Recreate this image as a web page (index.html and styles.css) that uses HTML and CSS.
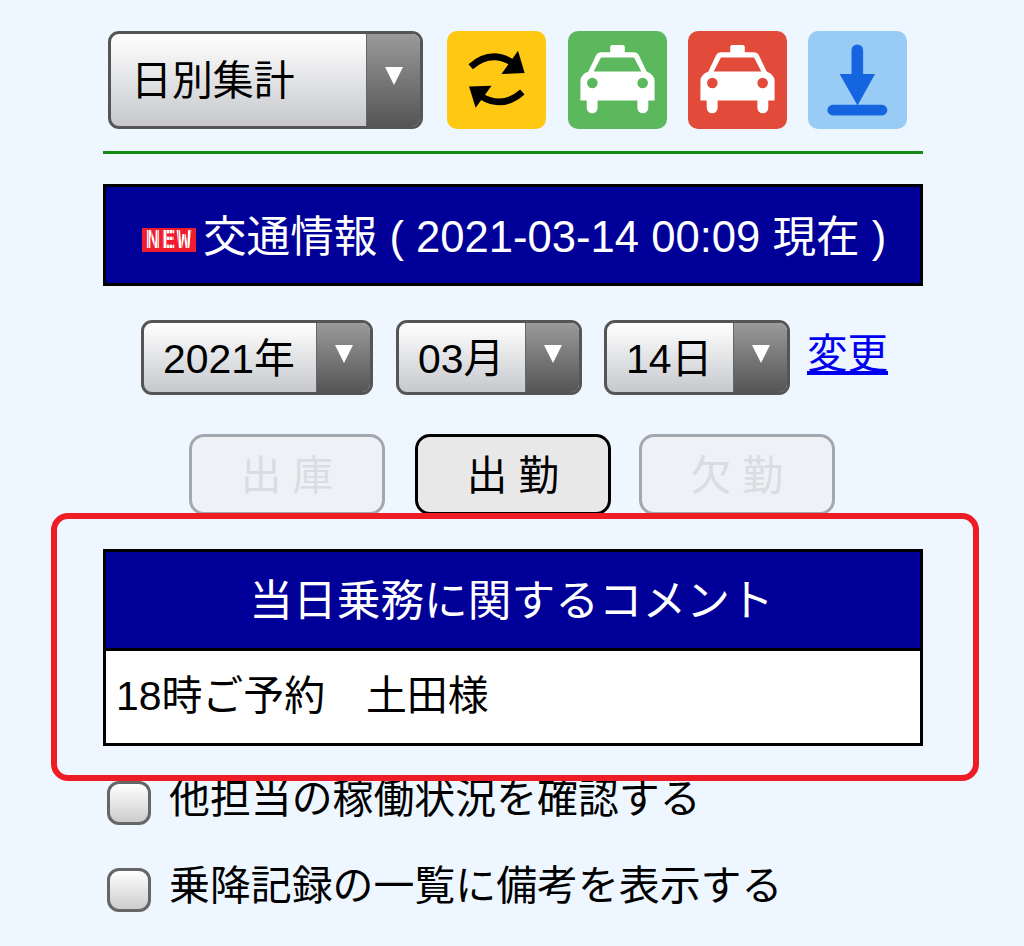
FILE: index.html
```html
<!DOCTYPE html>
<html lang="ja">
<head>
  <meta charset="UTF-8" />
  <title>日別集計</title>
  <link rel="stylesheet" href="styles.css">
</head>
<body>

<div class="marco">
  <div class="fila-top">
    <div class="sel sel-top"><span class="sel-txt">日別集計</span><span class="sel-btn"></span></div>
    <div class="iconos">
      <a class="tile amarillo">
        <svg viewBox="0 0 296 296">
          <path d="M70 108 Q130 55 195 95" fill="none" stroke="#000" stroke-width="20"/>
          <polygon points="213,60 233,127 163,130" fill="#000"/>
          <path d="M226 184 Q166 237 101 197" fill="none" stroke="#000" stroke-width="20"/>
          <polygon points="85,232 65,168 133,165" fill="#000"/>
        </svg>
      </a>
      <a class="tile verde">
        <svg viewBox="0 0 296 296">
          <use href="#taxi"/>
          <circle cx="72" cy="157" r="16" fill="#5cb85c"/>
          <circle cx="224" cy="157" r="16" fill="#5cb85c"/>
          <path d="M98 80H198L220 122H76Z" fill="#5cb85c"/>
        </svg>
      </a>
      <a class="tile rojo">
        <svg viewBox="0 0 296 296">
          <use href="#taxi"/>
          <circle cx="72" cy="157" r="16" fill="#e24a3a"/>
          <circle cx="224" cy="157" r="16" fill="#e24a3a"/>
          <path d="M98 80H198L220 122H76Z" fill="#e24a3a"/>
        </svg>
      </a>
      <a class="tile celeste">
        <svg viewBox="0 0 296 296">
          <path d="M130 58a17.500 17.500 0 0 1 35 0V130H201L148 225L94 130H130Z" fill="#1565e0"/>
          <rect x="57" y="223" width="181" height="32" rx="16" fill="#1565e0"/>
        </svg>
      </a>
    </div>
  </div>

  <div class="linea"></div>

  <div class="titulo info"><span class="nuevo">NEW</span>交通情報 ( 2021-03-14 00:09 現在 )</div>

  <div class="fila-fecha">
    <div class="sel sel-ano"><span class="sel-txt">2021年</span><span class="sel-btn"></span></div>
    <div class="sel sel-mes"><span class="sel-txt">03月</span><span class="sel-btn"></span></div>
    <div class="sel sel-dia"><span class="sel-txt">14日</span><span class="sel-btn"></span></div>
    <a class="cambio" href="#">変更</a>
  </div>

  <div class="fila-botones">
    <button type="button" class="boton" disabled>出 庫</button>
    <button type="button" class="boton activo">出 勤</button>
    <button type="button" class="boton" disabled>欠 勤</button>
  </div>

  <div class="comentario">
    <div class="titulo coment-head">当日乗務に関するコメント</div>
    <div class="coment-body">18時ご予約　土田様</div>
  </div>

  <label class="check check-1"><span class="caja"></span><span class="check-txt">他担当の稼働状況を確認する</span></label>
  <label class="check check-2"><span class="caja"></span><span class="check-txt">乗降記録の一覧に備考を表示する</span></label>
</div>

<div class="marca"></div>

<svg class="defs" width="0" height="0">
  <defs>
    <path id="taxi" fill="#fff" d="M126 48a6 6 0 0 1 6-6H164a6 6 0 0 1 6 6V64H196Q208 64 213 74L236 122Q260 132 260 150V210H241V232A13 13 0 0 1 208 232V210H88V232A13 13 0 0 1 55 232V210H36V150Q36 132 60 122L83 74Q88 64 100 64H126Z"/>
  </defs>
</svg>

</body>
</html>
```

FILE: styles.css
```css
* {
  box-sizing: border-box;
}

body {
  margin: 0;
  height: 946px;
  overflow: hidden;
  position: relative;
  background: #eef6ff;
  color: #000;
  font-family: "Liberation Sans", "Noto Sans CJK JP", sans-serif;
  font-size: 40.900px;
}

.marco {
  width: 820px;
  margin-left: 103px;
  padding-top: 31px;
}

.fila-top {
  display: flex;
  padding-left: 5px;
}

.iconos {
  display: flex;
  gap: 21px;
  margin-left: 24px;
}

.tile {
  display: block;
  width: 99px;
  height: 98px;
  border-radius: 10px;
}

.tile svg {
  display: block;
  width: 99px;
  height: 98px;
}

.amarillo { background: #fec813; margin-right: 1px; }
.verde { background: #5cb85c; }
.rojo { background: #e24a3a; }
.celeste { background: #99ccf5; }

.defs {
  position: absolute;
}

.sel {
  display: flex;
  border: 3px solid #555;
  border-radius: 11px;
  overflow: hidden;
  background: linear-gradient(to bottom, #fff, #c6c8cc);
}

.sel-txt {
  flex: 1;
  display: flex;
  align-items: center;
  line-height: 1;
}

.sel-btn {
  width: 54px;
  display: flex;
  justify-content: center;
  background: linear-gradient(to bottom, #9a9a9a, #555);
  border-left: 1px solid #666;
}

.sel-btn::after {
  content: "";
  width: 0;
  height: 0;
  border-left: 9.500px solid transparent;
  border-right: 9.500px solid transparent;
  border-top: 18px solid #fff;
}

.sel-top {
  width: 315px;
  height: 98px;
}

.sel-top .sel-txt {
  padding: 2px 0 0 20px;
}

.sel-top .sel-btn::after {
  margin-top: 33px;
}

.linea {
  height: 3px;
  margin-top: 22px;
  background: #158a15;
}

.titulo {
  background: #000099;
  color: #fff;
  border: 3px solid #000;
  text-align: center;
}

.info {
  height: 102px;
  margin-top: 30px;
  line-height: 100px;
  font-size: 43.600px;
  padding-left: 36px;
  text-align: left;
  white-space: nowrap;
}

.nuevo {
  position: relative;
  display: inline-block;
  width: 54px;
  height: 24px;
  margin-right: 7px;
  background: #ee1c2e;
  color: #fff;
  font-family: "DejaVu Sans Mono", monospace;
  font-size: 24px;
  font-weight: bold;
  line-height: 24px;
  letter-spacing: 1px;
  text-align: center;
  vertical-align: 4px;
}

/* rayitas del letrero */
.nuevo::after {
  content: "";
  position: absolute;
  inset: 0;
  background: repeating-linear-gradient(to right, rgba(238,28,46,.45) 0 1px, transparent 1px 3px);
}

.fila-fecha {
  display: flex;
  align-items: flex-start;
  margin-top: 34px;
  padding-left: 38px;
}

.fila-fecha .sel {
  height: 75px;
}

.fila-fecha .sel-txt {
  padding: 3px 0 0 19px;
}

.fila-fecha .sel-btn::after {
  margin-top: 22px;
}

.sel-ano { width: 232px; margin-right: 23px; }
.sel-mes { width: 186px; margin-right: 22px; }
.sel-dia { width: 186px; margin-right: 17px; }

.cambio {
  color: #0000ee;
  font-size: 40.500px;
  line-height: 68px;
}

.fila-botones {
  display: flex;
  margin-top: 39px;
  padding-left: 86px;
}

.boton {
  width: 196px;
  height: 81px;
  border: 3px solid #000;
  border-radius: 15px;
  background: #e8e8e8;
  color: #000;
  font-family: inherit;
  font-size: 40.500px;
  line-height: 1;
  padding: 3px 0 0;
}

.activo {
  margin: 0 28px 0 30px;
}

.boton:disabled {
  border-color: #a2a8ae;
  background: #eef1f5;
  color: #d9dde1;
}

.comentario {
  margin-top: 34px;
  border: 3px solid #000;
  background: #fff;
}

.coment-head {
  border: 0;
  border-bottom: 3px solid #000;
  height: 99px;
  line-height: 98px;
  font-size: 43.700px;
  padding-right: 3px;
}

.coment-body {
  height: 92px;
  padding-left: 10px;
  line-height: 90px;
}

.check {
  display: flex;
  align-items: center;
  padding-left: 4px;
  height: 44px;
  line-height: 44px;
}

.check-1 {
  margin-top: 35px;
}

.check-2 {
  margin-top: 43px;
}

.check-txt {
  padding-bottom: 8px;
}

.caja {
  width: 44px;
  height: 44px;
  margin-right: 18px;
  border: 3px solid #666;
  border-radius: 12px;
  background: linear-gradient(to bottom, #fff, #ccc);
}

/* marco rojo puesto encima */
.marca {
  position: absolute;
  left: 51px;
  top: 513px;
  width: 928px;
  height: 268px;
  border: 6px solid #ee1c25;
  border-radius: 17px;
}
```
